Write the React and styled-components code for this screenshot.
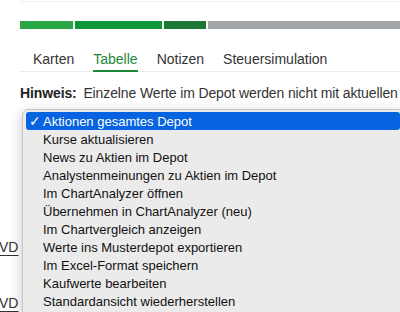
import React from "react";
import styled, { createGlobalStyle } from "styled-components";

const GlobalStyle = createGlobalStyle`
  html, body {
    margin: 0;
    padding: 0;
    background: #ffffff;
  }
  body {
    font-family: "Liberation Sans", Arial, sans-serif;
    color: #2d2d2d;
  }
`;

const tabs = ["Karten", "Tabelle", "Notizen", "Steuersimulation"];

const segments = [
  { width: 53, color: "#2aa646" },
  { width: 87, color: "#0e9535" },
  { width: 42, color: "#1c7a36" },
  { width: 0, color: "#a1a5a8" },
];

const actions = [
  "Aktionen gesamtes Depot",
  "Kurse aktualisieren",
  "News zu Aktien im Depot",
  "Analystenmeinungen zu Aktien im Depot",
  "Im ChartAnalyzer öffnen",
  "Übernehmen in ChartAnalyzer (neu)",
  "Im Chartvergleich anzeigen",
  "Werte ins Musterdepot exportieren",
  "Im Excel-Format speichern",
  "Kaufwerte bearbeiten",
  "Standardansicht wiederherstellen",
];

const App = () => {
  return (
    <Page>
      <GlobalStyle />
      <Section>
        <TopRule />
        <Progress>
          {segments.map((s, i) => (
            <Segment key={i} $color={s.color} $width={s.width} />
          ))}
        </Progress>
        <TabRow>
          {tabs.map((t) => (
            <Tab key={t} $active={t === "Tabelle"}>
              {t}
            </Tab>
          ))}
        </TabRow>
        <Hint>
          <HintLabel>Hinweis:</HintLabel> Einzelne Werte im Depot werden nicht mit aktuellen
        </Hint>
      </Section>

      <Table>
        <Row>
          <CellLink>VD</CellLink>
        </Row>
        <Row>
          <CellLink>VD</CellLink>
        </Row>
      </Table>

      <Menu>
        {actions.map((a, i) => (
          <MenuItem key={a} $selected={i === 0}>
            <Check>{i === 0 ? "✓" : ""}</Check>
            {a}
          </MenuItem>
        ))}
      </Menu>
    </Page>
  );
};

export default App;

const Page = styled.div`
  position: relative;
  width: 400px;
  height: 312px;
  overflow: hidden;
  background: #ffffff;
`;

const Section = styled.div`
  padding-left: 20px;
`;

const TopRule = styled.div`
  margin-top: 1px;
  height: 1px;
  background: #f1f1f1;
`;

const Progress = styled.div`
  display: flex;
  gap: 2px;
  height: 8px;
  margin-top: 19px;
`;

const Segment = styled.div`
  flex: ${(p) => (p.$width ? `0 0 ${p.$width}px` : "1 1 auto")};
  background: ${(p) => p.$color};
`;

const TabRow = styled.div`
  display: flex;
  gap: 19px;
  margin-top: 20px;
  padding-left: 13px;
  border-bottom: 1px solid #ececec;
`;

const Tab = styled.div`
  font-size: 14px;
  line-height: 20px;
  padding-bottom: 1px;
  margin-bottom: -1px;
  color: ${(p) => (p.$active ? "#1b8a38" : "#333333")};
  border-bottom: 2px solid ${(p) => (p.$active ? "#1b8a38" : "transparent")};
`;

const Hint = styled.div`
  margin-top: 11px;
  font-size: 14px;
  line-height: 20px;
  letter-spacing: -0.12px;
  white-space: nowrap;
  color: #333333;
`;

const HintLabel = styled.span`
  font-weight: bold;
  color: #222222;
  margin-right: 3px;
`;

const Table = styled.div`
  margin-top: 116px;
`;

const Row = styled.div`
  height: 56px;
  display: flex;
  align-items: center;
`;

const CellLink = styled.span`
  margin-left: -1px;
  font-size: 14px;
  color: #333333;
  text-decoration: underline;
  text-underline-offset: 3px;
`;

const Menu = styled.div`
  position: absolute;
  left: 22px;
  top: 109px;
  width: 374px;
  padding: 2px 3px 6px;
  background: #ebebeb;
  border: 1px solid #c6c6c6;
  border-radius: 6px;
  box-shadow: 0 4px 14px rgba(0, 0, 0, 0.22);
`;

const MenuItem = styled.div`
  display: flex;
  align-items: center;
  height: 18px;
  font-family: "Liberation Sans", Arial, sans-serif;
  font-size: 13px;
  white-space: nowrap;
  border-radius: 3px;
  color: ${(p) => (p.$selected ? "#ffffff" : "#111111")};
  background: ${(p) => (p.$selected ? "#0763e0" : "transparent")};
`;

const Check = styled.span`
  width: 14px;
  margin-left: 3px;
  font-family: "DejaVu Sans", sans-serif;
  font-size: 14px;
  line-height: 18px;
`;
